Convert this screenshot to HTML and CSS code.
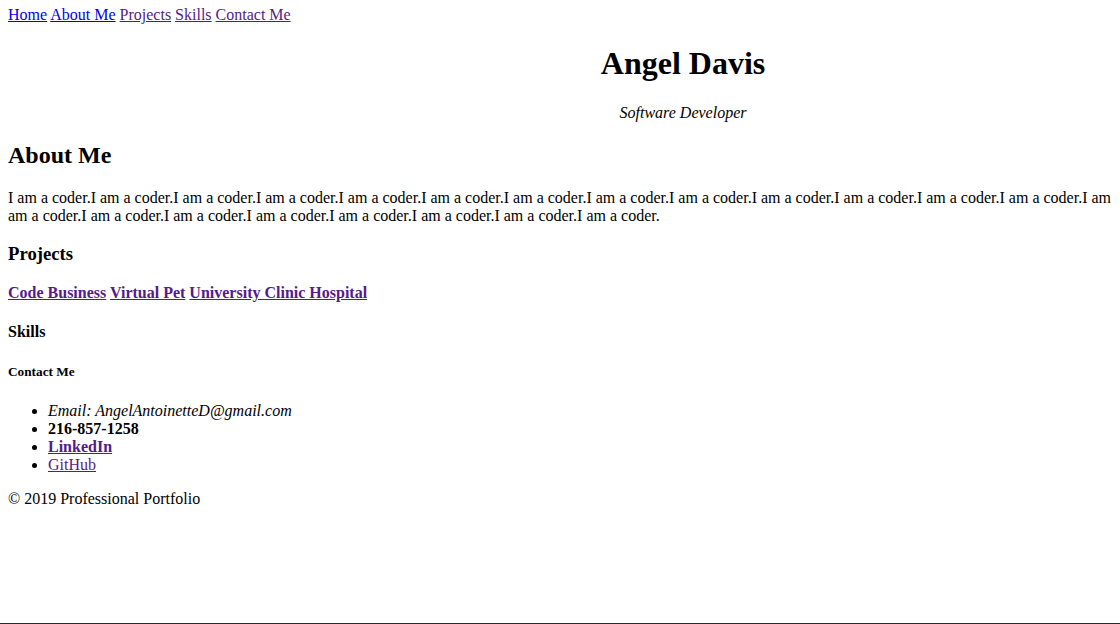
FILE: index.html
```html
<!DOCTYPE html>
<html lang="en">
<head>
<meta charset="utf-8">
<title>Professional Portfolio</title>
<link rel="stylesheet" href="styles.css">
</head>
<body>
<div class="page">
  <nav class="nav">
    <a href="#" class="fresh">Home</a>
    <a href="#about" class="fresh">About Me</a>
    <a href="#projects" class="seen">Projects</a>
    <a href="#skills" class="seen">Skills</a>
    <a href="#contact" class="seen">Contact Me</a>
  </nav>
  <header class="header">
    <h1 class="name">Angel Davis</h1>
    <p class="role"><i>Software Developer</i></p>
  </header>
  <section id="about">
    <h2 class="h2">About Me</h2>
    <p class="text">I am a coder.I am a coder.I am a coder.I am a coder.I am a coder.I am a coder.I am a coder.I am a coder.I am a coder.I am a coder.I am a coder.I am a coder.I am a coder.I am a coder.I am a coder.I am a coder.I am a coder.I am a coder.I am a coder.I am a coder.I am a coder.I am a coder.I am a coder.I am a coder.</p>
  </section>
  <section id="projects">
    <h3 class="h3">Projects</h3>
    <p class="text projects"><a href="#" class="seen">Code Business</a> <a href="#" class="seen">Virtual Pet</a> <a href="#" class="seen">University Clinic Hospital</a></p>
  </section>
  <section id="skills">
    <h4 class="h4">Skills</h4>
  </section>
  <section id="contact">
    <h5 class="h5">Contact Me</h5>
    <ul class="list">
      <li><i>Email: AngelAntoinetteD@gmail.com</i></li>
      <li><b>216-857-1258</b></li>
      <li><b><a href="#" class="seen">LinkedIn</a></b></li>
      <li><a href="#" class="seen">GitHub</a></li>
    </ul>
  </section>
  <footer class="footer">
    <p class="text">© 2019 Professional Portfolio</p>
  </footer>
</div>
</body>
</html>
```
FILE: styles.css
```css
html {
  overflow: hidden;
  height: 624px;
  box-sizing: border-box;
  border-bottom: 1px solid #2a2a2a;
}
body {
  margin: 6px 8px 8px;
  font-family: "Liberation Serif", "Times New Roman", serif;
  font-size: 16px;
  color: #000;
  background: #fff;
}
.page {
  width: 1350px;
}
.fresh { color: #0000ee; }
.seen { color: #551a8b; }
.header { text-align: center; }
.name { font-size: 32px; margin: 21.44px 0; }
.role { margin: 16px 0; }
.h2 { font-size: 24px; margin: 19.92px 0; }
.h3 { font-size: 18.72px; margin: 18.72px 0; }
.h4 { font-size: 16px; margin: 21.28px 0; }
.h5 { font-size: 13.28px; margin: 22.18px 0; }
.text { margin: 16px 0; }
.projects { font-weight: bold; }
.list { margin: 16px 0; padding-left: 40px; }
```
